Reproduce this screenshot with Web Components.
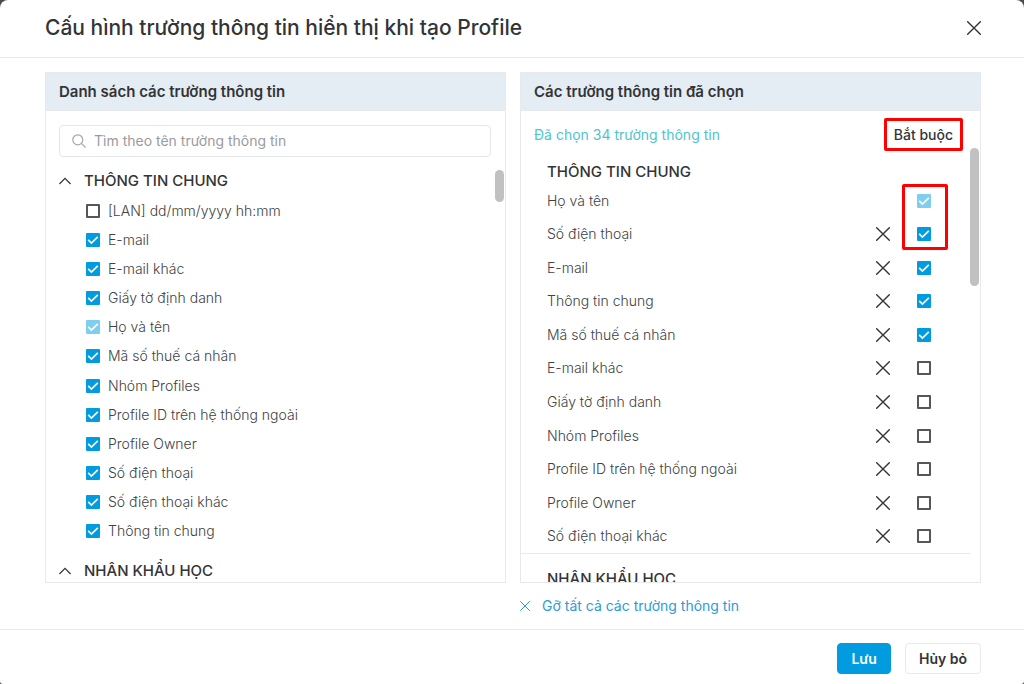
<!DOCTYPE html>
<html lang="vi">
<head>
<meta charset="utf-8">
<title>Cấu hình trường thông tin</title>
<style>
  html, body { margin: 0; height: 100%; }
  body { background: #4a4b4d; font: 14px/20px Inter, "Noto Sans", sans-serif; color: #333436; overflow: hidden; }
</style>
</head>
<body>
<config-dialog>
  <span slot="title">Cấu hình trường thông tin hiển thị khi tạo Profile</span>
  <field-panel heading="Danh sách các trường thông tin"><available-fields></available-fields></field-panel>
  <field-panel heading="Các trường thông tin đã chọn"><chosen-fields></chosen-fields></field-panel>
  <action-button slot="actions" kind="primary">Lưu</action-button>
  <action-button slot="actions">Hủy bỏ</action-button>
</config-dialog>
<script>
const define = (name, html, setup) => {
  const template = document.createElement('template');
  template.innerHTML = '<style>*{box-sizing:border-box}:host{display:block;box-sizing:border-box}button{font:inherit;color:inherit;background:none;border:0;padding:0;margin:0;cursor:pointer}</style>' + html;
  customElements.define(name, class extends HTMLElement {
    constructor() {
      super();
      this.attachShadow({ mode: 'open' }).append(template.content.cloneNode(true));
    }
    connectedCallback() {
      if (setup && !this.ready) { this.ready = true; setup(this, this.shadowRoot); }
    }
  });
};

define('icon-cross', `
  <style>:host{width:14px;height:14px;flex:none} svg{display:block;width:100%;height:100%}</style>
  <svg viewBox="0 0 14 14" fill="none" stroke="currentColor" stroke-width="1.4" stroke-linecap="round" aria-hidden="true"><path d="M.7.7l12.6 12.6M13.3.7L.7 13.3"/></svg>`);

define('action-button', `
  <style>
    button{height:31px;padding:0 13px;border:1px solid #e8e9ed;border-radius:4px;background:#fff;font-weight:600;display:block}
    :host([kind=primary]) button{background:#009cdf;border-color:#009cdf;color:#fff}
  </style>
  <button type="button"><slot></slot></button>`);

define('check-box', `
  <style>
    :host{display:block;min-width:0}
    label{display:flex;align-items:center;gap:8px}
    .box{display:grid;width:14px;height:14px;flex:none}
    input,svg{grid-area:1/1;width:14px;height:14px;margin:0}
    input{appearance:none;border:2px solid #55575a;border-radius:1px;background:#fff}
    input:checked{background:#009cdf;border-color:#009cdf}
    input:disabled{background:#80ceef;border-color:#80ceef}
    svg{visibility:hidden;pointer-events:none}
    input:checked + svg{visibility:visible}
    .text{white-space:nowrap}
    .text:empty{display:none}
  </style>
  <label><span class="box"><input type="checkbox"><svg viewBox="0 0 14 14" fill="none" stroke="#fff" stroke-width="1.7" aria-hidden="true"><path d="M2.2 6.8l3.2 3.2 6.4-6.2"/></svg></span><span class="text"></span></label>`,
  (el, root) => {
    const input = root.querySelector('input');
    input.checked = el.hasAttribute('checked');
    input.disabled = el.hasAttribute('disabled');
    if (el.hasAttribute('name-only')) input.setAttribute('aria-label', el.getAttribute('label'));
    else root.querySelector('.text').textContent = el.getAttribute('label');
  });

define('field-panel', `
  <style>
    :host{display:flex;flex-direction:column;min-width:0;min-height:0;border:1px solid #e8e9ed}
    h2{margin:0;padding:9px 13px 8px;font:600 15px/20px Inter,"Noto Sans",sans-serif;background:#e4ecf4;border-bottom:1px solid #e8e9ed;flex:none}
    ::slotted(*){flex:1;min-height:0}
  </style>
  <h2></h2><slot></slot>`,
  (el, root) => { root.querySelector('h2').textContent = el.getAttribute('heading'); });

define('available-fields', `
  <style>
    :host{display:flex;flex-direction:column;position:relative;padding-top:14px;color:#404244}
    .search{display:flex;align-items:center;gap:8px;height:32px;margin:0 14px 9px 13px;padding:0 12px;border:1px solid #e5e6ea;border-radius:4px;flex:none}
    .search svg{width:14px;height:14px;flex:none}
    input{flex:1;min-width:0;border:0;outline:0;padding:0;background:none;font:inherit;color:inherit}
    input::placeholder{color:#9a9b9e;opacity:1}
    .scroll{flex:1;min-height:0;overflow-y:auto;scrollbar-width:none}
    .group{display:flex;align-items:center;gap:13px;height:30px;padding:0 13px;font-weight:500;font-size:15px;color:#333436}
    .group svg{width:12px;height:12px}
    .list{display:grid;grid-auto-rows:1fr;align-items:center;min-height:350px;margin-bottom:10px;padding-left:40px;font-weight:300}
    .thumb{position:absolute;right:1px;top:59px;width:9px;height:32px;border-radius:5px;background:#c1c1c1}
  </style>
  <div class="search">
    <svg viewBox="0 0 14 14" fill="none" stroke="#a6a7aa" stroke-width="1.2" aria-hidden="true"><circle cx="5.8" cy="5.8" r="5"/><path d="M9.4 9.4l4.1 4.1"/></svg>
    <input type="text" placeholder="Tìm theo tên trường thông tin" aria-label="Tìm theo tên trường thông tin">
  </div>
  <div class="scroll">
    <button class="group" type="button"><svg viewBox="0 0 12 12" fill="none" stroke="currentColor" stroke-width="1.3" aria-hidden="true"><path d="M.4 9L6 3.4 11.6 9"/></svg>THÔNG TIN CHUNG</button>
    <div class="list"></div>
    <button class="group" type="button"><svg viewBox="0 0 12 12" fill="none" stroke="currentColor" stroke-width="1.3" aria-hidden="true"><path d="M.4 9L6 3.4 11.6 9"/></svg>NHÂN KHẨU HỌC</button>
  </div>
  <div class="thumb"></div>`,
  (el, root) => {
    const list = root.querySelector('.list');
    ['[LAN] dd/mm/yyyy hh:mm', 'E-mail', 'E-mail khác', 'Giấy tờ định danh', 'Họ và tên', 'Mã số thuế cá nhân',
     'Nhóm Profiles', 'Profile ID trên hệ thống ngoài', 'Profile Owner', 'Số điện thoại', 'Số điện thoại khác', 'Thông tin chung'
    ].forEach((label, i) => {
      const box = document.createElement('check-box');
      box.setAttribute('label', label);
      if (i > 0) box.setAttribute('checked', '');
      if (label === 'Họ và tên') box.setAttribute('disabled', '');
      list.append(box);
    });
  });

define('chosen-row', `
  <style>
    :host{display:flex;align-items:center;gap:27px;padding:0 49px 0 26px;color:#404244;font-weight:300}
    .name{flex:1;min-width:0;white-space:nowrap}
    button{display:block;color:#333436}
  </style>
  <span class="name"></span><button type="button"><icon-cross></icon-cross></button><check-box name-only></check-box>`,
  (el, root) => {
    const label = el.getAttribute('label');
    root.querySelector('.name').textContent = label;
    const button = root.querySelector('button');
    if (el.hasAttribute('locked')) button.remove();
    else button.setAttribute('aria-label', 'Gỡ ' + label);
  });

define('chosen-fields', `
  <style>
    :host{display:flex;flex-direction:column;position:relative;padding-top:7px}
    .summary{display:flex;align-items:center;justify-content:space-between;height:33px;padding:0 17px 0 13px;flex:none;color:#50c4cd}
    .required{padding:4px 7px;border:3px solid #f00;border-radius:2px;color:#333436;font-weight:500;line-height:19px}
    .scroll{flex:1;min-height:0;overflow-y:auto;scrollbar-width:none}
    h3{margin:0;padding:9px 26px 0;font:500 15px/24px Inter,"Noto Sans",sans-serif}
    .list{display:grid;grid-auto-rows:1fr;min-height:370px;margin-right:10px;border-bottom:1px solid #e8e9ed}
    .list chosen-row{margin-right:-10px}
    h3.next{padding-top:13px}
    .mark{position:absolute;right:32px;top:73px;width:46px;height:66px;border:3px solid #f00;border-radius:2px;pointer-events:none}
    .thumb{position:absolute;right:1px;top:37px;width:9px;height:138px;border-radius:5px;background:#c1c1c1}
  </style>
  <div class="summary"><span>Đã chọn 34 trường thông tin</span><span class="required">Bắt buộc</span></div>
  <div class="scroll">
    <h3>THÔNG TIN CHUNG</h3>
    <div class="list"></div>
    <h3 class="next">NHÂN KHẨU HỌC</h3>
  </div>
  <div class="mark"></div>
  <div class="thumb"></div>`,
  (el, root) => {
    const list = root.querySelector('.list');
    ['Họ và tên', 'Số điện thoại', 'E-mail', 'Thông tin chung', 'Mã số thuế cá nhân', 'E-mail khác', 'Giấy tờ định danh',
     'Nhóm Profiles', 'Profile ID trên hệ thống ngoài', 'Profile Owner', 'Số điện thoại khác'
    ].forEach((label, i) => {
      const row = document.createElement('chosen-row');
      row.setAttribute('label', label);
      const box = row.shadowRoot.querySelector('check-box');
      box.setAttribute('label', 'Bắt buộc: ' + label);
      if (i < 5) box.setAttribute('checked', '');
      if (i === 0) { row.setAttribute('locked', ''); box.setAttribute('disabled', ''); }
      list.append(row);
    });
  });

define('config-dialog', `
  <style>
    :host{display:flex;flex-direction:column;height:100vh;background:#fff;border-radius:8px 8px 3px 3px}
    header{display:flex;align-items:center;justify-content:space-between;height:58px;padding:0 43px 2px 45px;border-bottom:1px solid #e8e9ed;flex:none}
    h1{margin:0;font:500 21px/28px Inter,"Noto Sans",sans-serif}
    main{flex:1;min-height:0;display:grid;grid-template-columns:1fr 1fr;grid-template-rows:minmax(0,1fr) 46px;column-gap:14px;padding:14px 43px 0 45px}
    .clear{grid-column:2;justify-self:start;display:flex;align-items:center;gap:12px;color:#2e9bd8}
    .clear icon-cross{width:10px;height:10px}
    footer{display:flex;justify-content:flex-end;gap:14px;padding:13px 43px 10px;border-top:1px solid #e8e9ed;flex:none}
  </style>
  <header><h1><slot name="title"></slot></h1><button type="button" aria-label="Đóng"><icon-cross></icon-cross></button></header>
  <main><slot></slot><button class="clear" type="button"><icon-cross></icon-cross>Gỡ tất cả các trường thông tin</button></main>
  <footer><slot name="actions"></slot></footer>`);
</script>
</body>
</html>
